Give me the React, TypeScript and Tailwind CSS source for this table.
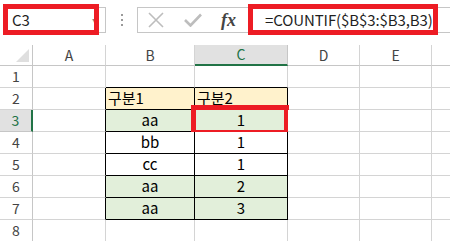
import React from "react";

const FONT = { fontFamily: '"Noto Sans CJK KR", "Noto Sans", sans-serif' };

// F is only partly on screen, its letter falls past the right edge
const cols = [
  { key: "A", w: 73, label: "A" },
  { key: "B", w: 89, label: "B" },
  { key: "C", w: 93, label: "C" },
  { key: "D", w: 72, label: "D" },
  { key: "E", w: 72, label: "E" },
  { key: "F", w: 60, label: "" },
];

type Cell = { text?: string; align?: "left" | "center"; bg?: string };

// table B2:C7
const data: Record<string, Cell> = {
  B2: { text: "구분1", align: "left", bg: "bg-[#fff2cc]" },
  C2: { text: "구분2", align: "left", bg: "bg-[#fff2cc]" },
  B3: { text: "aa", bg: "bg-[#e2efda]" },
  C3: { text: "1", bg: "bg-[#e2efda]" },
  B4: { text: "bb" },
  C4: { text: "1" },
  B5: { text: "cc" },
  C5: { text: "1" },
  B6: { text: "aa", bg: "bg-[#e2efda]" },
  C6: { text: "2", bg: "bg-[#e2efda]" },
  B7: { text: "aa", bg: "bg-[#e2efda]" },
  C7: { text: "3", bg: "bg-[#e2efda]" },
};

const inTable = (c: string, r: number) => (c === "B" || c === "C") && r >= 2 && r <= 7;

function SheetCell({ c, r }: { c: string; r: number }) {
  const cell = data[c + r];
  const rightDark = inTable(c, r) || (c === "A" && r >= 2 && r <= 7);
  const bottomDark = inTable(c, r) || (r === 1 && (c === "B" || c === "C"));
  return (
    <div
      className={`relative flex h-[22px] items-center border-r border-b text-[15px] text-black ${
        rightDark ? "border-r-black" : "border-r-[#d4d4d4]"
      } ${bottomDark ? "border-b-black" : "border-b-[#d4d4d4]"} ${cell?.bg ?? "bg-white"} ${
        cell?.align === "left" ? "justify-start pl-[2px]" : "justify-center"
      }`}
    >
      {cell?.text}
      {c === "C" && r === 3 && (
        <div className="pointer-events-none absolute -top-[5px] -left-[4px] -right-[2px] -bottom-[4px] border-[5px] border-[#ed1c24]" />
      )}
    </div>
  );
}

function XIcon() {
  return (
    <svg width="16" height="16" viewBox="0 0 16 16">
      <path d="M1 1 L15 15 M15 1 L1 15" stroke="#bdbdbd" strokeWidth="1.6" fill="none" />
    </svg>
  );
}

function CheckIcon() {
  return (
    <svg width="18" height="14" viewBox="0 0 18 14">
      <path d="M1 7 L6.5 12.5 L17 1.5" stroke="#bdbdbd" strokeWidth="2.6" fill="none" />
    </svg>
  );
}

export default function App() {
  const rows = [1, 2, 3, 4, 5, 6, 7, 8];
  return (
    <div className="h-[241px] w-[450px] overflow-hidden bg-white" style={FONT}>
      {/* formula bar */}
      <div className="relative flex h-[45px] items-start pt-[7px]">
        <div className="ml-[3px] flex h-[26px] w-[103px] shrink-0 items-center justify-between border border-[#c6c6c6] pl-[8px] pr-[7px] text-[15px] text-[#1f1f1f]">
          <span>C3</span>
          <span className="text-[6px] text-[#888]">▼</span>
        </div>
        <div className="flex h-[26px] w-[31px] shrink-0 flex-col items-center justify-center gap-[3px]">
          <span className="h-[2px] w-[2px] bg-[#9a9a9a]" />
          <span className="h-[2px] w-[2px] bg-[#9a9a9a]" />
          <span className="h-[2px] w-[2px] bg-[#9a9a9a]" />
        </div>
        <div className="flex h-[26px] min-w-0 flex-1 items-center border border-[#c6c6c6] border-r-0">
          <div className="flex w-[110px] shrink-0 items-center pl-[10px]">
            <XIcon />
            <span className="ml-[20px]">
              <CheckIcon />
            </span>
            <span
              className="ml-[19px] text-[18px] font-bold italic text-[#444]"
              style={{ fontFamily: '"Liberation Serif", serif' }}
            >
              fx
            </span>
          </div>
          <span className="whitespace-nowrap pl-[17px] text-[15px] tracking-[-0.1px] text-[#1f1f1f]">
            =COUNTIF($B$3:$B3,B3)
          </span>
        </div>
        <div className="pointer-events-none absolute left-[3px] top-[4px] h-[31px] w-[96px] border-[5px] border-[#ed1c24]" />
        <div className="pointer-events-none absolute left-[248px] top-[4px] h-[31px] w-[190px] border-[5px] border-[#ed1c24]" />
      </div>

      {/* column headers */}
      <div className="flex h-[21px]">
        <div className="relative w-[33px] shrink-0 border-r border-b border-[#c6c6c6] bg-white">
          <svg className="absolute right-[3px] bottom-[3px]" width="13" height="13" viewBox="0 0 13 13">
            <polygon points="13,0 13,13 0,13" fill="#dfdfdf" />
          </svg>
        </div>
        {cols.map((col) => (
          <div
            key={col.key}
            style={{ width: col.w }}
            className={`flex shrink-0 items-center justify-center border-r text-[14px] ${
              col.key === "C"
                ? "border-r-[#c6c6c6] border-b-[2px] border-b-[#217346] bg-[#e1e1e1] text-[#217346]"
                : "border-r-[#d4d4d4] border-b border-b-[#c6c6c6] text-[#444]"
            }`}
          >
            {col.label}
          </div>
        ))}
      </div>

      {/* rows */}
      {rows.map((r) => (
        <div key={r} className="flex">
          <div
            className={`flex h-[22px] w-[33px] shrink-0 items-center justify-center border-b text-[14px] ${
              r === 3
                ? "border-r-[2px] border-r-[#217346] border-b-[#c6c6c6] bg-[#e1e1e1] text-[#217346]"
                : "border-r border-r-[#c6c6c6] border-b-[#d4d4d4] text-[#444]"
            }`}
          >
            {r}
          </div>
          {cols.map((col) => (
            <div key={col.key} style={{ width: col.w }} className="shrink-0">
              <SheetCell c={col.key} r={r} />
            </div>
          ))}
        </div>
      ))}
    </div>
  );
}
